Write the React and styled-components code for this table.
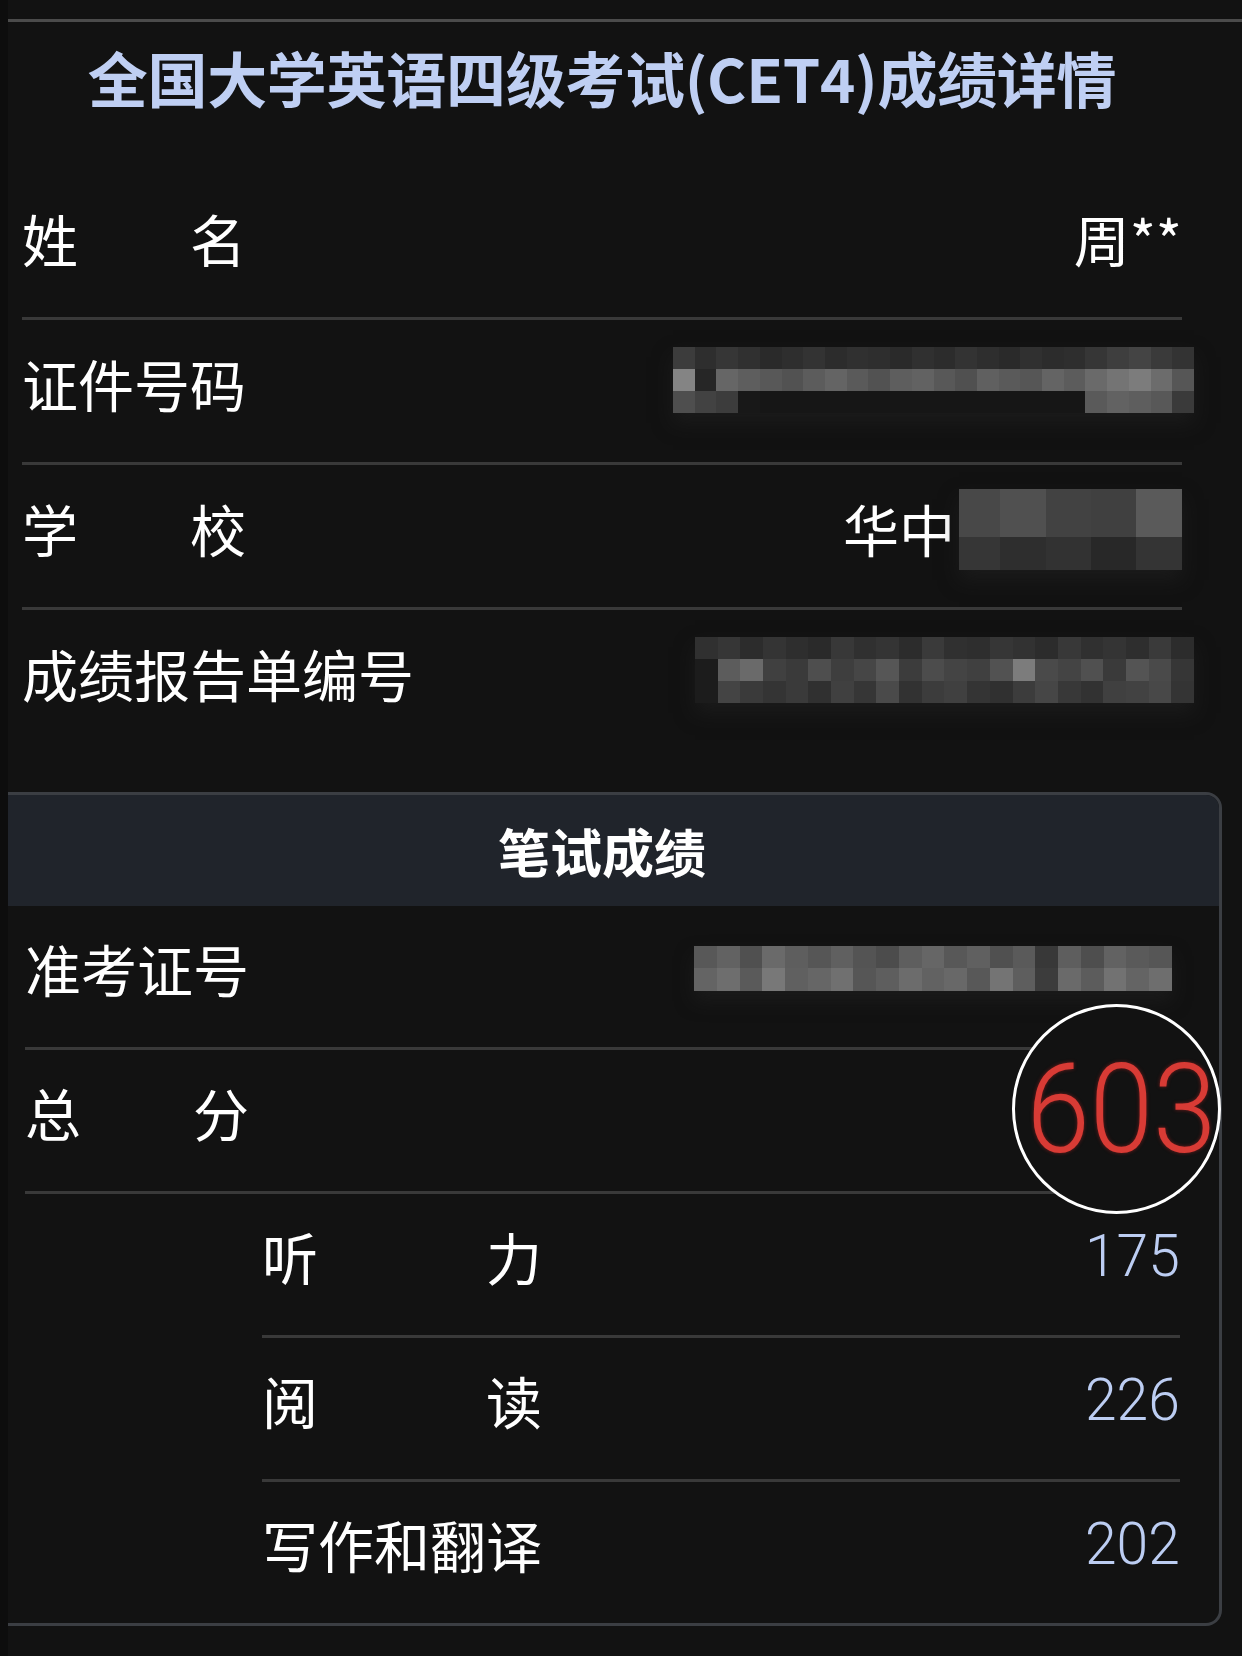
import React from 'react';
import styled, { createGlobalStyle } from 'styled-components';

const GlobalStyle = createGlobalStyle`
  html, body { margin: 0; padding: 0; background: #0d0d0d; }
  body { font-family: "Noto Sans CJK SC", "Noto Sans", sans-serif; }
  #root { width: 1242px; min-height: 1656px; }
`;

const Screen = styled.div`
  margin-left: 8px;
  width: 1234px;
  min-height: 1656px;
  box-sizing: border-box;
  padding-top: 19px;
  background: #121212;
  display: flex;
  flex-direction: column;
`;

const TopRule = styled.div`
  height: 3px;
  background: #4b4b4b;
`;

const Title = styled.h1`
  margin: 25px 0 68px;
  padding-right: 46px;
  height: 60px;
  font-size: 60px;
  line-height: 60px;
  letter-spacing: -0.3px;
  font-weight: 700;
  color: #bfcff3;
  text-align: center;
  white-space: nowrap;
`;

const InfoList = styled.div`
  padding: 0 60px 0 14px;
  display: flex;
  flex-direction: column;
`;

const Row = styled.div`
  position: relative;
  display: flex;
  align-items: center;
  justify-content: space-between;
  box-sizing: border-box;
  height: ${(p) => p.$h}px;
  padding-bottom: 17px;
  margin-left: ${(p) => p.$indent || 0}px;
  border-bottom: 3px solid #393939;
  &:last-child {
    border-bottom: 0;
    height: ${(p) => p.$h - 3}px;
  }
`;

const Label = styled.span`
  display: inline-block;
  width: ${(p) => (p.$em ? `${p.$em}em` : 'auto')};
  font-size: 56px;
  line-height: 64px;
  color: #ffffff;
  white-space: nowrap;
  text-align: justify;
  text-align-last: justify;
`;

const Value = styled.span`
  display: flex;
  align-items: center;
  gap: 4px;
  font-size: 56px;
  line-height: 64px;
  color: #ffffff;
  white-space: nowrap;
`;

const Mosaic = styled.div`
  display: grid;
  grid-template-columns: ${(p) => p.$cols};
  grid-template-rows: ${(p) => p.$rows};
  width: ${(p) => p.$w}px;
  margin-right: ${(p) => p.$over || 0}px;
  margin-top: ${(p) => (p.$dy > 0 ? p.$dy * 2 : 0)}px;
  margin-bottom: ${(p) => (p.$dy < 0 ? -p.$dy * 2 : 0)}px;
  filter: blur(0.5px);
  box-shadow: 0 10px 18px rgba(34, 34, 34, 0.55);
`;

const Cell = styled.span`
  background: #${(p) => p.$c.repeat(3)};
`;

const Card = styled.section`
  margin-top: 40px;
  width: 1214px;
  box-sizing: border-box;
  border: 3px solid #3b3e43;
  border-left: 0;
  border-radius: 0 16px 16px 0;
  display: flex;
  flex-direction: column;
`;

const CardHeader = styled.h2`
  margin: 0;
  height: 111px;
  padding-right: 23px;
  display: flex;
  align-items: center;
  justify-content: center;
  background: #20242b;
  border-top-right-radius: 13px;
  font-size: 52px;
  font-weight: 700;
  color: #ffffff;
`;

const CardBody = styled.div`
  padding: 0 39px 0 17px;
  display: flex;
  flex-direction: column;
`;

const SubScore = styled.span`
  display: inline-block;
  font-family: Roboto, "Noto Sans", sans-serif;
  font-weight: 300;
  font-size: 60px;
  line-height: 64px;
  color: #bccdf2;
  transform: scaleX(0.95);
  transform-origin: right center;
`;

const TotalScore = styled.span`
  position: relative;
  z-index: 2;
  display: inline-block;
  margin-right: -36px;
  margin-bottom: 5px;
  font-family: Roboto, "Noto Sans", sans-serif;
  font-weight: 300;
  font-size: 124px;
  line-height: 124px;
  color: #d83b35;
  text-shadow: 0 0 4px rgba(230, 40, 40, 0.5);
  transform: scaleX(0.92);
  transform-origin: right center;
`;

const Ring = styled.span`
  position: absolute;
  z-index: 1;
  top: -46px;
  right: -41px;
  width: 209px;
  height: 210px;
  box-sizing: border-box;
  border: 3px solid #ffffff;
  border-radius: 50%;
  background: #121212;
`;

const mosaics = {
  id: {
    w: 521,
    cols: 'repeat(24, 1fr)',
    rows: 'repeat(3, 22px)',
    cells: [
      ['3c','2e','36','30','2a','2e','33','2c','30','2e','2a','30','2c','33','2e','2a','30','2c','2e','36','3e','44','3a','33'],
      ['84','26','66','5e','58','52','5c','64','5a','52','5e','62','58','50','60','5a','56','64','5c','6a','74','7c','6c','56'],
      ['4e','42','3c','18','16','16','16','16','16','16','16','16','16','16','16','16','16','16','16','5a','62','5e','58','3a'],
    ],
  },
  report: {
    w: 499,
    cols: 'repeat(22, 1fr)',
    rows: 'repeat(3, 22px)',
    cells: [
      ['30','36','2c','34','2e','2a','38','30','34','2c','3a','30','2e','36','32','2c','38','30','34','2e','3a','2c'],
      ['1c','5c','6a','40','3a','4e','3e','46','56','3c','4c','44','40','52','7c','4a','44','50','3a','54','4a','36'],
      ['1c','44','3a','34','3a','30','40','36','4a','32','3c','40','34','30','3c','46','38','32','40','42','48','34'],
    ],
  },
  exam: {
    w: 478,
    cols: 'repeat(21, 1fr)',
    rows: 'repeat(2, 22.5px)',
    cells: [
      ['58','62','50','6a','5e','56','60','54','4c','5e','66','58','60','50','5a','38','5e','4e','62','5a','56'],
      ['64','6e','5a','78','60','66','70','56','5e','6c','62','68','58','74','5e','3c','6a','5c','72','64','6e'],
    ],
  },
  school: {
    w: 223,
    cols: '41px 46px 45px 45px 46px',
    rows: '48px 33px',
    cells: [
      ['48','50','42','40','5a'],
      ['36','2e','32','28','34'],
    ],
  },
};

function Blur({ name, over, dy }) {
  const m = mosaics[name];
  return (
    <Mosaic $w={m.w} $cols={m.cols} $rows={m.rows} $over={over} $dy={dy}>
      {m.cells.flat().map((c, i) => (
        <Cell key={i} $c={c} />
      ))}
    </Mosaic>
  );
}

const subScores = [
  { label: '听 力', value: '175' },
  { label: '阅 读', value: '226' },
  { label: '写作和翻译', value: '202' },
];

export default function App() {
  return (
    <>
      <GlobalStyle />
      <Screen>
        <TopRule />
        <Title>全国大学英语四级考试(CET4)成绩详情</Title>
        <InfoList>
          <Row $h={145}>
            <Label $em={4}>姓 名</Label>
            <Value>周**</Value>
          </Row>
          <Row $h={145}>
            <Label>证件号码</Label>
            <Blur name="id" over={-12} dy={-2.5} />
          </Row>
          <Row $h={145}>
            <Label $em={4}>学 校</Label>
            <Value>
              华中
              <Blur name="school" dy={2} />
            </Value>
          </Row>
          <Row $h={145}>
            <Label>成绩报告单编号</Label>
            <Blur name="report" over={-12} dy={-2.5} />
          </Row>
        </InfoList>
        <Card>
          <CardHeader>笔试成绩</CardHeader>
          <CardBody>
            <Row $h={144}>
              <Label>准考证号</Label>
              <Blur name="exam" over={8} />
            </Row>
            <Row $h={144}>
              <Label $em={4}>总 分</Label>
              <Ring />
              <TotalScore>603</TotalScore>
            </Row>
            {subScores.map((s) => (
              <Row key={s.label} $h={144} $indent={237}>
                <Label $em={5}>{s.label}</Label>
                <SubScore>{s.value}</SubScore>
              </Row>
            ))}
          </CardBody>
        </Card>
      </Screen>
    </>
  );
}
